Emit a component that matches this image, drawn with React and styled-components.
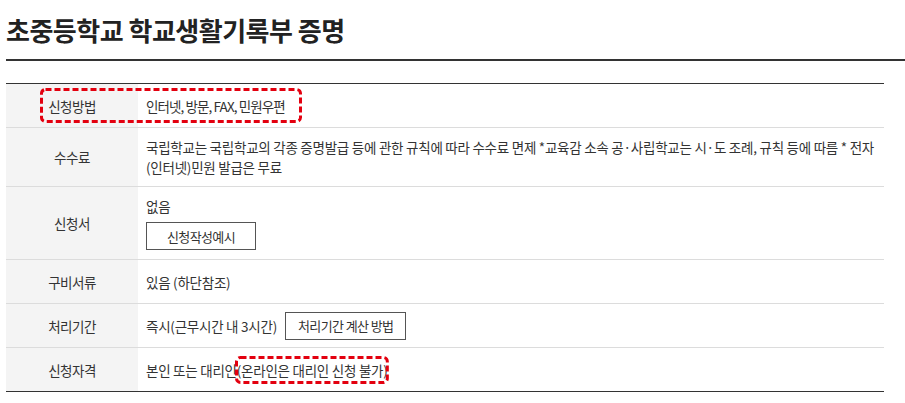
import React from "react";
import styled, { createGlobalStyle } from "styled-components";

const Global = createGlobalStyle`
  html, body { margin: 0; padding: 0; background: #fff; }
  body { font-family: "Noto Sans CJK KR", "Noto Sans", sans-serif; color: #333; }
`;

const Page = styled.div`
  padding: 13px 0 0 6px;
`;

const Title = styled.h1`
  margin: 0;
  padding-bottom: 12px;
  font-size: 26px;
  line-height: 34px;
  font-weight: 700;
  letter-spacing: -0.5px;
  color: #222;
  border-bottom: 2px solid #333;
`;

const Table = styled.div`
  width: 878px;
  margin-top: 22px;
  border-top: 1px solid #333;
  border-bottom: 1px solid #333;
`;

const Row = styled.div`
  position: relative;
  display: grid;
  grid-template-columns: 132px 1fr;
  min-height: 43px;
  border-top: ${(p) => (p.$first ? "none" : "1px solid #dcdcdc")};
`;

const Label = styled.div`
  display: flex;
  align-items: center;
  justify-content: center;
  background: #f4f4f4;
  font-size: 13.5px;
  letter-spacing: -0.5px;
  color: #333;
`;

const Value = styled.div`
  display: flex;
  flex-direction: column;
  justify-content: center;
  align-items: flex-start;
  gap: 6px;
  padding: ${(p) => (p.$tight ? "7px 8px" : "9px 8px")};
  font-size: 13.5px;
  line-height: 20px;
  letter-spacing: ${(p) => (p.$dense ? "-0.9px" : "-0.25px")};
  word-break: keep-all;
  color: #333;
`;

const Inline = styled.div`
  display: flex;
  align-items: center;
  gap: 8px;
`;

const Button = styled.button`
  box-sizing: border-box;
  height: 28px;
  min-width: 110px;
  padding: 0 12px;
  border: 1px solid #555;
  background: #fff;
  font-family: inherit;
  font-size: 13px;
  letter-spacing: -0.6px;
  color: #333;
  cursor: pointer;
`;

const Marked = styled.span`
  position: relative;
`;

const DashBox = styled.svg`
  position: absolute;
  overflow: visible;
  pointer-events: none;
`;

const FirstMark = styled(DashBox)`
  left: 34px;
  top: 4px;
  width: 262px;
  height: 35px;
`;

const InlineMark = styled(DashBox)`
  left: -2px;
  top: 50%;
  width: calc(100% + 3px);
  height: 28px;
  transform: translateY(-50%);
`;

function Dashed({ as: Comp }) {
  return (
    <Comp>
      <rect
        x="1.5"
        y="1.5"
        width="calc(100% - 3px)"
        height="calc(100% - 3px)"
        rx="4"
        fill="none"
        stroke="#e3000f"
        strokeWidth="3"
        strokeDasharray="6 3"
      />
    </Comp>
  );
}

export default function App() {
  return (
    <>
      <Global />
      <Page>
        <Title>초중등학교 학교생활기록부 증명</Title>
        <Table>
          <Row $first>
            <Label>신청방법</Label>
            <Value $dense>인터넷, 방문, FAX, 민원우편</Value>
            <Dashed as={FirstMark} />
          </Row>
          <Row>
            <Label>수수료</Label>
            <Value>
              <span>
                국립학교는 국립학교의 각종 증명발급 등에 관한 규칙에 따라 수수료 면제 *교육감 소속 공·사립학교는 시·도 조례, 규칙 등에 따름 * 전자
                (인터넷)민원 발급은 무료
              </span>
            </Value>
          </Row>
          <Row>
            <Label>신청서</Label>
            <Value>
              <span>없음</span>
              <Button>신청작성예시</Button>
            </Value>
          </Row>
          <Row>
            <Label>구비서류</Label>
            <Value>있음 (하단참조)</Value>
          </Row>
          <Row>
            <Label>처리기간</Label>
            <Value $tight>
              <Inline>
                <span>즉시(근무시간 내 3시간)</span>
                <Button>처리기간 계산 방법</Button>
              </Inline>
            </Value>
          </Row>
          <Row>
            <Label>신청자격</Label>
            <Value>
              <span>
                본인 또는 대리인
                <Marked>
                  (온라인은 대리인 신청 불가)
                  <Dashed as={InlineMark} />
                </Marked>
              </span>
            </Value>
          </Row>
        </Table>
      </Page>
    </>
  );
}
